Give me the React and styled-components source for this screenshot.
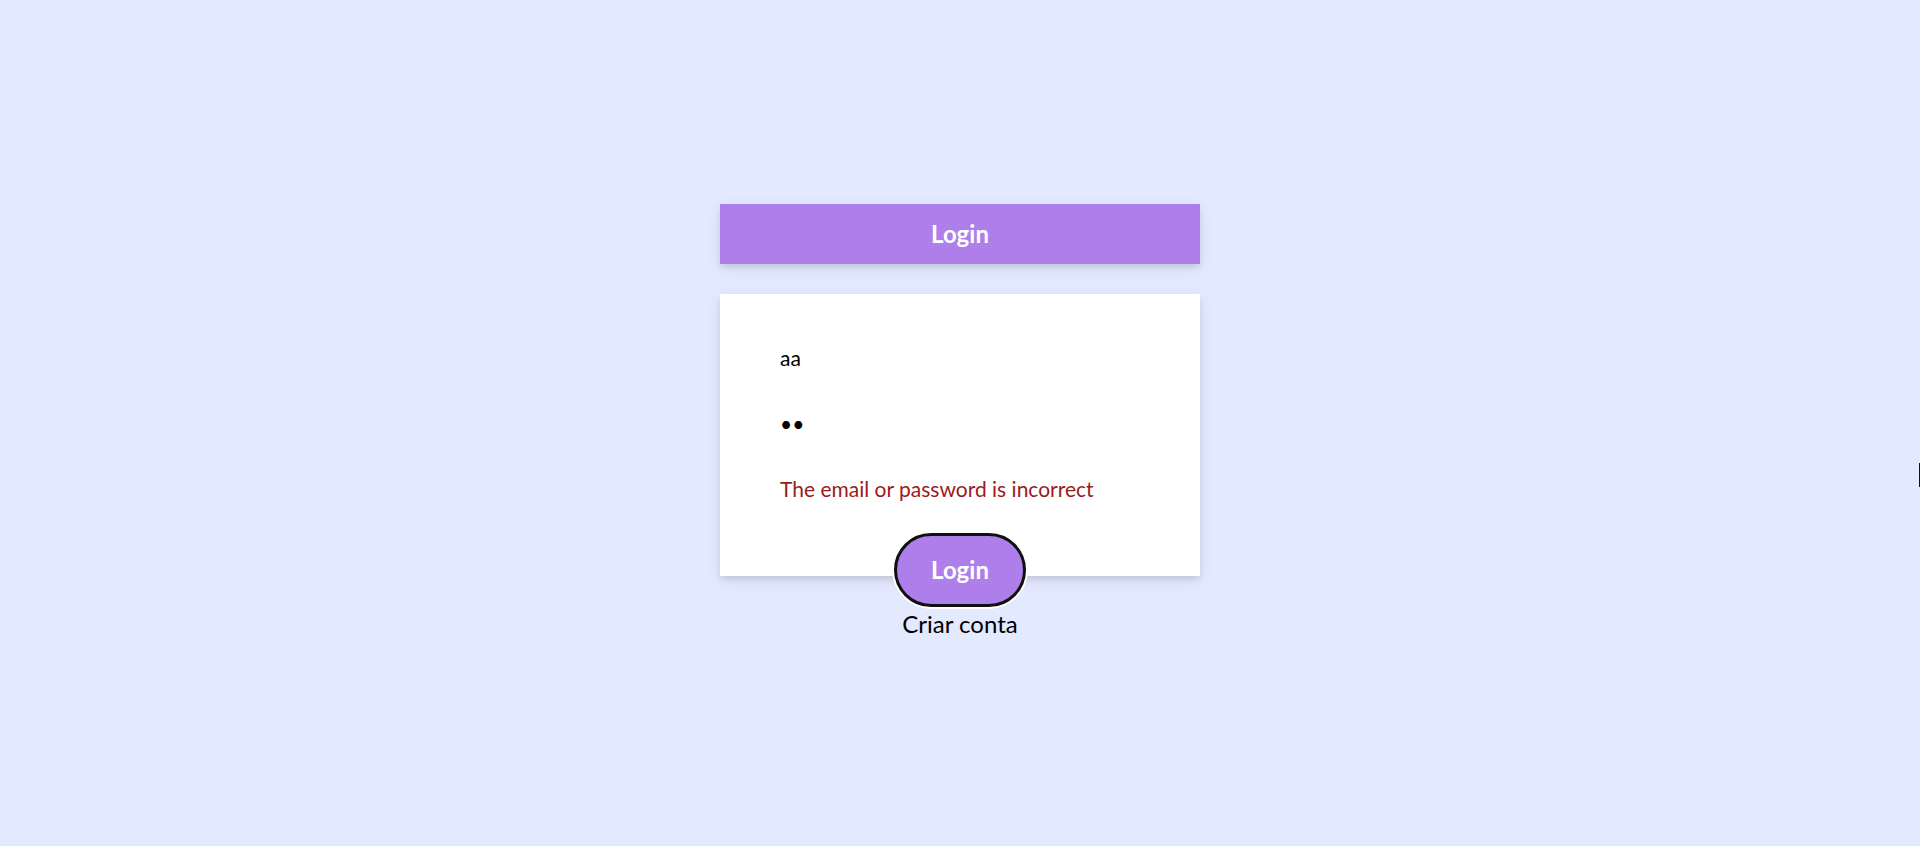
import React from "react";
import styled, { createGlobalStyle } from "styled-components";

const GlobalStyle = createGlobalStyle`
  *, *::before, *::after { box-sizing: border-box; }
  body {
    margin: 0;
    background: #e3e9ff;
    color: #000;
    font-family: Lato, sans-serif;
  }
`;

const Page = styled.main`
  position: relative;
  min-height: 100vh;
  display: flex;
  flex-direction: column;
  align-items: center;
  justify-content: center;
`;

const panelShadow = "0 4px 6px -1px rgba(0, 0, 0, 0.1), 0 4px 15px rgba(0, 0, 0, 0.08)";

const Title = styled.h1`
  width: 100%;
  max-width: 480px;
  margin: 0 0 30px;
  padding: 12px;
  background: #ae7eea;
  box-shadow: ${panelShadow};
  color: #fff;
  font-size: 24px;
  line-height: 36px;
  font-weight: 700;
  text-align: center;
`;

const Card = styled.form`
  width: 100%;
  max-width: 480px;
  padding: 30px 60px 0;
  display: flex;
  flex-direction: column;
  background: #fff;
  box-shadow: ${panelShadow};
`;

const Field = styled.input`
  width: 100%;
  height: 66px;
  padding: 0;
  border: 0;
  outline: 0;
  background: transparent;
  color: #000;
  font: 400 21px/30px Lato, sans-serif;
`;

const ErrorText = styled.p`
  margin: 0;
  color: #991b1b;
  font-size: 21px;
  line-height: 66px;
`;

const SubmitButton = styled.button`
  align-self: center;
  margin: 11px 0 -31px;
  padding: 16px 34px;
  border: 3px solid #101010;
  border-radius: 37px;
  box-shadow: 0 0 0 2px #fff;
  background: #ae7eea;
  color: #fff;
  font: 700 24px/36px Lato, sans-serif;
  cursor: pointer;
`;

const SignUpLink = styled.a`
  margin-top: 30px;
  color: #000;
  font-size: 24px;
  line-height: 36px;
  text-decoration: none;
`;

const EdgeMark = styled.span`
  position: absolute;
  right: 0;
  top: 463px;
  width: 1px;
  height: 24px;
  background: #0c1022;
`;

export default function App() {
  return (
    <>
      <GlobalStyle />
      <Page>
        <Title>Login</Title>
        <Card onSubmit={(event) => event.preventDefault()}>
          <Field type="text" aria-label="Email" defaultValue="aa" />
          <Field type="password" aria-label="Password" defaultValue="aa" />
          <ErrorText role="alert">The email or password is incorrect</ErrorText>
          <SubmitButton type="submit">Login</SubmitButton>
        </Card>
        <SignUpLink href="#signup">Criar conta</SignUpLink>
        <EdgeMark />
      </Page>
    </>
  );
}
